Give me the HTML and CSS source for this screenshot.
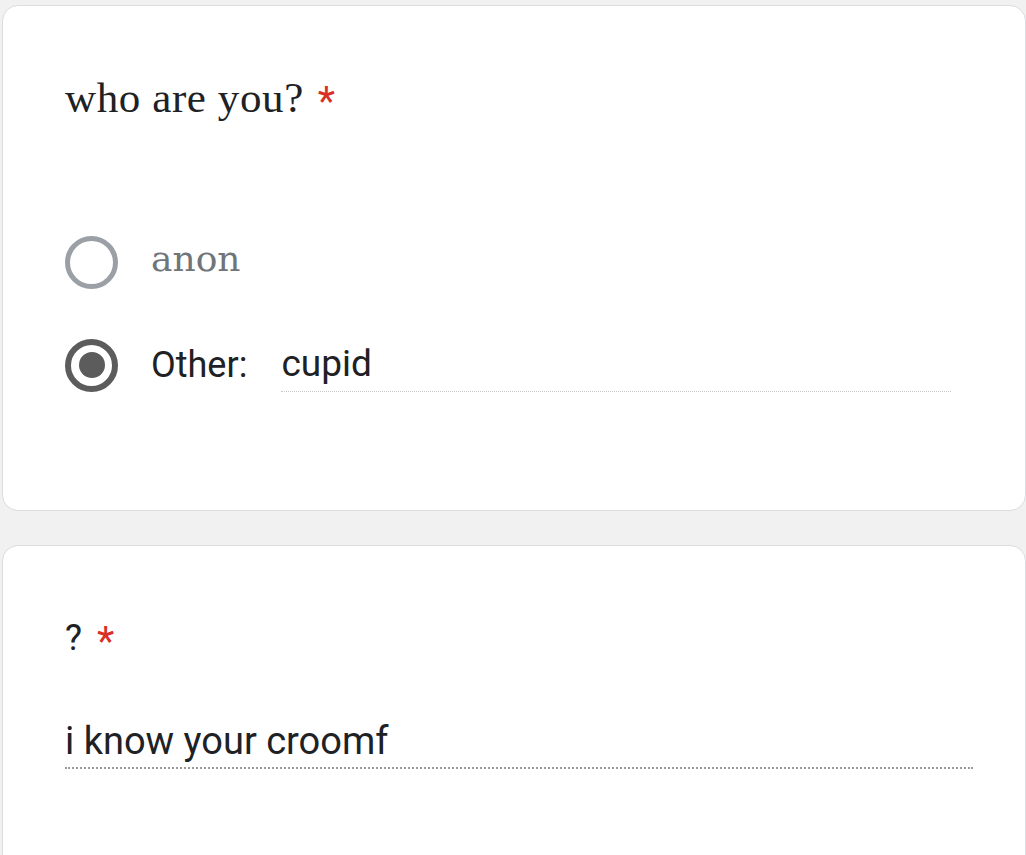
FILE: index.html
```html
<!DOCTYPE html>
<html>
<head>
<meta charset="utf-8">
<link rel="stylesheet" href="styles.css">
</head>
<body>
<div class="page">
  <section class="card card-one">
    <h2 class="q-title serif">who are you?<span class="req">*</span></h2>
    <div class="options">
      <label class="option">
        <span class="radio"></span>
        <span class="opt-label">anon</span>
      </label>
      <label class="option">
        <span class="radio checked"><span class="dot"></span></span>
        <span class="other-label">Other:</span>
        <span class="other-input">cupid</span>
      </label>
    </div>
  </section>
  <section class="card card-two">
    <h2 class="q-title sans">?<span class="req">*</span></h2>
    <div class="answer">i know your croomf</div>
  </section>
</div>
</body>
</html>
```
FILE: styles.css
```css
html, body {
  margin: 0;
  padding: 0;
  background: #f1f1f1;
  overflow: hidden;
}
.page {
  padding: 5px 0 0 2px;
  display: flex;
  flex-direction: column;
  gap: 34px;
}
.card {
  box-sizing: border-box;
  width: 1024px;
  background: #fff;
  border: 1.5px solid #dadce0;
  border-radius: 16px;
  padding: 0 0 0 62px;
}
.card-one {
  height: 506px;
  padding-top: 70px;
}
.card-two {
  height: 330px;
  padding-top: 70px;
}
.q-title {
  margin: 0;
  font-weight: 400;
  color: #202124;
  line-height: 44px;
  display: flex;
  align-items: flex-start;
}
.q-title.serif {
  font-family: "Liberation Serif", "DejaVu Serif", serif;
  font-size: 43px;
  letter-spacing: 0.6px;
}
.q-title.sans {
  font-family: Roboto, "Liberation Sans", sans-serif;
  font-size: 36px;
}
.req {
  color: #d93025;
  font-family: Roboto, "Liberation Sans", sans-serif;
  font-size: 40px;
  line-height: 40px;
  margin-left: 14px;
  letter-spacing: 0;
}
.serif .req {
  margin-top: 6px;
}
.sans .req {
  margin-left: 15px;
  margin-top: 6px;
}
.options {
  margin-top: 114px;
  display: flex;
  flex-direction: column;
  gap: 54px;
}
.option {
  display: flex;
  align-items: center;
  height: 52px;
}
.radio {
  box-sizing: border-box;
  width: 53px;
  height: 53px;
  border-radius: 50%;
  border: 5px solid #9aa0a6;
  display: flex;
  align-items: center;
  justify-content: center;
  flex: none;
}
.radio.checked {
  border: 6px solid #5c5c5c;
  position: relative;
  top: -3px;
}
.dot {
  width: 26px;
  height: 26px;
  border-radius: 50%;
  background: #5c5c5c;
}
.opt-label {
  margin-left: 33px;
  font-family: "DejaVu Serif", serif;
  font-size: 36px;
  color: #70757a;
  position: relative;
  top: -4px;
}
.other-label {
  margin-left: 33px;
  font-family: Roboto, "Liberation Sans", sans-serif;
  font-size: 36px;
  color: #202124;
  position: relative;
  top: -3px;
}
.other-input {
  margin-left: 34px;
  width: 670px;
  box-sizing: border-box;
  font-family: Roboto, "Liberation Sans", sans-serif;
  font-size: 37px;
  color: #202124;
  padding-bottom: 6px;
  border-bottom: 1.5px dotted #c8c8c8;
  position: relative;
  top: -1px;
}
.answer {
  margin-top: 55px;
  width: 908px;
  font-family: Roboto, "Liberation Sans", sans-serif;
  font-size: 38px;
  color: #202124;
  line-height: 48px;
  padding-bottom: 2px;
  border-bottom: 2px dotted #9a9a9a;
}
```
